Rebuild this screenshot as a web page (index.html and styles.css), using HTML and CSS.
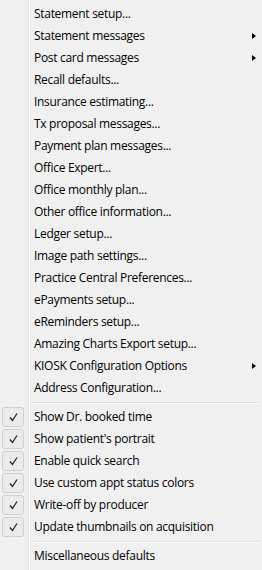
FILE: index.html
```html
<!DOCTYPE html>
<html lang="en">
<head>
  <meta charset="UTF-8" />
  <title>Setup menu</title>
  <link rel="stylesheet" href="styles.css">
</head>
<body>
  <div class="menu">
    <div class="item"><span class="gutter"></span><span class="label">Statement setup...</span></div>
    <div class="item"><span class="gutter"></span><span class="label">Statement messages</span><span class="arrow"></span></div>
    <div class="item"><span class="gutter"></span><span class="label">Post card messages</span><span class="arrow"></span></div>
    <div class="item"><span class="gutter"></span><span class="label">Recall defaults...</span></div>
    <div class="item"><span class="gutter"></span><span class="label">Insurance estimating...</span></div>
    <div class="item"><span class="gutter"></span><span class="label">Tx proposal messages...</span></div>
    <div class="item"><span class="gutter"></span><span class="label">Payment plan messages...</span></div>
    <div class="item"><span class="gutter"></span><span class="label">Office Expert...</span></div>
    <div class="item"><span class="gutter"></span><span class="label">Office monthly plan...</span></div>
    <div class="item"><span class="gutter"></span><span class="label">Other office information...</span></div>
    <div class="item"><span class="gutter"></span><span class="label">Ledger setup...</span></div>
    <div class="item"><span class="gutter"></span><span class="label">Image path settings...</span></div>
    <div class="item"><span class="gutter"></span><span class="label">Practice Central Preferences...</span></div>
    <div class="item"><span class="gutter"></span><span class="label">ePayments setup...</span></div>
    <div class="item"><span class="gutter"></span><span class="label">eReminders setup...</span></div>
    <div class="item"><span class="gutter"></span><span class="label">Amazing Charts Export setup...</span></div>
    <div class="item"><span class="gutter"></span><span class="label">KIOSK Configuration Options</span><span class="arrow"></span></div>
    <div class="item"><span class="gutter"></span><span class="label">Address Configuration...</span></div>
    <div class="sep"></div>
    <div class="item checked"><span class="gutter"><span class="check"><svg width="9" height="9" viewBox="0 0 9 9"><path d="M1 4.5 L3.5 7.5 L8 0.5" fill="none" stroke="#222" stroke-width="1.3"/></svg></span></span><span class="label">Show Dr. booked time</span></div>
    <div class="item checked"><span class="gutter"><span class="check"><svg width="9" height="9" viewBox="0 0 9 9"><path d="M1 4.5 L3.5 7.5 L8 0.5" fill="none" stroke="#222" stroke-width="1.3"/></svg></span></span><span class="label">Show patient's portrait</span></div>
    <div class="item checked"><span class="gutter"><span class="check"><svg width="9" height="9" viewBox="0 0 9 9"><path d="M1 4.5 L3.5 7.5 L8 0.5" fill="none" stroke="#222" stroke-width="1.3"/></svg></span></span><span class="label">Enable quick search</span></div>
    <div class="item checked"><span class="gutter"><span class="check"><svg width="9" height="9" viewBox="0 0 9 9"><path d="M1 4.5 L3.5 7.5 L8 0.5" fill="none" stroke="#222" stroke-width="1.3"/></svg></span></span><span class="label">Use custom appt status colors</span></div>
    <div class="item checked"><span class="gutter"><span class="check"><svg width="9" height="9" viewBox="0 0 9 9"><path d="M1 4.5 L3.5 7.5 L8 0.5" fill="none" stroke="#222" stroke-width="1.3"/></svg></span></span><span class="label">Write-off by producer</span></div>
    <div class="item checked"><span class="gutter"><span class="check"><svg width="9" height="9" viewBox="0 0 9 9"><path d="M1 4.5 L3.5 7.5 L8 0.5" fill="none" stroke="#222" stroke-width="1.3"/></svg></span></span><span class="label">Update thumbnails on acquisition</span></div>
    <div class="sep"></div>
    <div class="item"><span class="gutter"></span><span class="label">Miscellaneous defaults</span></div>
  </div>
</body>
</html>
```

FILE: styles.css
```css
* { box-sizing: border-box; margin: 0; padding: 0; }
html, body { background: #f0f0f0; }
body {
  font-family: 'Open Sans', 'Noto Sans', sans-serif;
  font-size: 12px;
  letter-spacing: -0.3px;
  color: #000;
}
.menu {
  width: 262px;
  height: 570px;
  padding: 3px 0;
  background:
    linear-gradient(to right, transparent 28px, #e2e3e3 28px, #e2e3e3 29px, #fff 29px, #fff 30px, transparent 30px),
    #f0f0f0;
}
.item {
  height: 22px;
  display: flex;
  align-items: center;
}
.gutter {
  width: 34px;
  height: 22px;
  flex: none;
  display: flex;
  align-items: center;
  padding-left: 2px;
}
.check {
  width: 22px;
  height: 20px;
  border: 1px solid #cdcfd1;
  border-radius: 3px;
  background: #eaebec;
  display: flex;
  align-items: center;
  justify-content: center;
}
.label {
  flex: 1;
  white-space: nowrap;
  padding-bottom: 1px;
}
.arrow {
  width: 0;
  height: 0;
  border-top: 3.5px solid transparent;
  border-bottom: 3.5px solid transparent;
  border-left: 4px solid #000;
  margin-right: 6px;
}
.sep {
  height: 7px;
  margin-left: 30px;
  margin-right: 2px;
  padding-top: 3px;
}
.sep::before {
  content: '';
  display: block;
  height: 1px;
  background: #e0e0e0;
  border-bottom: 1px solid #fff;
  box-sizing: content-box;
}
```
